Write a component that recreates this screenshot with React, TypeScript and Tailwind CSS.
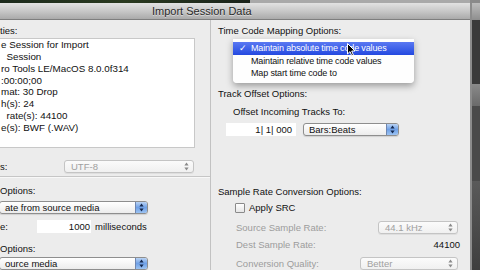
import React from "react";

function Arrows({ color }: { color: string }) {
  return (
    <svg width="5" height="9" viewBox="0 0 5 9">
      <path d="M2.5 0.5 L4.6 3.4 L0.4 3.4 Z" fill={color} />
      <path d="M2.5 8.5 L4.6 5.6 L0.4 5.6 Z" fill={color} />
    </svg>
  );
}

function Popup({
  className,
  text,
  disabled,
}: {
  className: string;
  text: string;
  disabled?: boolean;
}) {
  if (disabled) {
    return (
      <div
        className={
          "h-[13px] rounded-[3px] border border-[#c4c4c4] bg-gradient-to-b from-[#fbfbfb] to-[#f0f0f0] flex items-center shadow-[0_1px_0_rgba(0,0,0,0.06)] " +
          className
        }
      >
        <span className="flex-1 pl-[6px] text-[#a0a0a0] leading-[11px] whitespace-nowrap overflow-hidden">
          {text}
        </span>
        <div className="w-[13px] h-full flex items-center justify-center">
          <Arrows color="#8a8a8a" />
        </div>
      </div>
    );
  }
  return (
    <div
      className={
        "h-[13px] rounded-[3px] border border-[#8e8e8e] bg-gradient-to-b from-white to-[#ececec] flex items-center shadow-[0_1px_1px_rgba(0,0,0,0.12)] overflow-hidden " +
        className
      }
    >
      <span className="flex-1 pl-[5px] leading-[11px] whitespace-nowrap overflow-hidden">
        {text}
      </span>
      <div className="w-[12px] h-full flex items-center justify-center bg-gradient-to-b from-[#b9d3f4] via-[#6fa0e6] to-[#9cc3f2] border-l border-[#6e86b0]">
        <Arrows color="#14284e" />
      </div>
    </div>
  );
}

export default function App() {
  return (
    <div className="relative w-[480px] h-[270px] overflow-hidden bg-[#3a3a3a] flex flex-col text-[9.5px] text-[#111] font-['Liberation_Sans',Arial,sans-serif]">
      {/* top background strip */}
      <div className="h-[3px] flex shrink-0">
        <div className="w-[250px] bg-gradient-to-r from-[#1c2a1c] via-[#2a3a20] to-[#1a221a]" />
        <div className="w-[220px] bg-[#a9a9a9]" />
        <div className="flex-1 bg-[#8a8a8a]" />
      </div>
      <div className="flex flex-1 min-h-0">
        <div className="w-[470px] flex flex-col">
          {/* title bar */}
          <div className="h-[17px] shrink-0 bg-gradient-to-b from-[#e2e2e2] via-[#c8c8c8] to-[#aaaaaa] border-b border-[#7e7e7e] flex items-center pl-[152px]">
            <span className="text-[11px] text-[#2a2a2a] leading-[12px] [text-shadow:0_1px_0_rgba(255,255,255,0.5)]">
              Import Session Data
            </span>
          </div>
          {/* body */}
          <div className="flex flex-1 bg-[#ececec] min-h-0">
            {/* left panel */}
            <div className="w-[211px] shrink-0 border-r border-[#c2c2c2] flex flex-col">
              <div className="mt-[5px] h-[12px] leading-[12px]">ties:</div>
              <div className="mt-[1px] h-[112px] w-[196px] -ml-[1px] bg-white border border-[#c8c8c8] pl-[1px] text-[9.8px] leading-[11.85px] whitespace-pre">
                <div>e Session for Import</div>
                <div>{"  Session"}</div>
                <div>ro Tools LE/MacOS 8.0.0f314</div>
                <div>:00:00;00</div>
                <div>mat: 30 Drop</div>
                <div>h(s): 24</div>
                <div>{"  rate(s): 44100"}</div>
                <div>e(s): BWF (.WAV)</div>
              </div>
              <div className="mt-[12px] h-[13px] flex items-center">
                <span className="w-[64px] leading-[12px]">s:</span>
                <Popup className="w-[130px]" text="UTF-8" disabled />
              </div>
              <div className="mt-[3px] h-px bg-[#c6c6c6] shadow-[0_1px_0_#f8f8f8]" />
              <div className="mt-[8px] h-[12px] leading-[12px]">Options:</div>
              <div className="mt-[4px] flex">
                <Popup className="w-[149px] -ml-[1px]" text="ate from source media" />
              </div>
              <div className="mt-[6px] h-[13px] flex items-center">
                <span className="w-[37px] leading-[12px]">e:</span>
                <div className="w-[54px] h-[13px] bg-white flex items-center justify-end pr-[1px] leading-[12px]">
                  1000
                </div>
                <span className="ml-[4px] leading-[12px]">milliseconds</span>
              </div>
              <div className="mt-[10px] h-[12px] leading-[12px]">Options:</div>
              <div className="mt-[2px] flex">
                <Popup className="w-[149px] -ml-[1px]" text="ource media" />
              </div>
            </div>
            {/* right panel */}
            <div className="flex-1 flex flex-col pl-[7px] pr-[12px]">
              <div className="mt-[5px] h-[12px] leading-[12px]">Time Code Mapping Options:</div>
              <div className="h-[46px] shrink-0" />
              <div className="-ml-[7px] -mr-[12px] h-px bg-[#c6c6c6] shadow-[0_1px_0_#f8f8f8]" />
              <div className="mt-[5px] h-[12px] leading-[12px]">Track Offset Options:</div>
              <div className="mt-[6px] h-[12px] leading-[12px] pl-[15px]">Offset Incoming Tracks To:</div>
              <div className="mt-[5px] h-[13px] flex items-center pl-[8px]">
                <div className="w-[70px] h-[13px] bg-white flex items-center justify-end pr-[4px] leading-[12px] whitespace-pre">
                  {"1| 1| 000"}
                </div>
                <Popup className="w-[96px] ml-[7px]" text="Bars:Beats" />
              </div>
              <div className="mt-[42px] -ml-[7px] -mr-[12px] h-px bg-[#c6c6c6] shadow-[0_1px_0_#f8f8f8]" />
              <div className="mt-[8px] h-[12px] leading-[12px]">Sample Rate Conversion Options:</div>
              <div className="mt-[4px] h-[12px] flex items-center pl-[17px]">
                <div className="w-[10px] h-[10px] border border-[#8a8a8a] rounded-[1px] bg-gradient-to-b from-white to-[#e6e6e6]" />
                <span className="ml-[4px] leading-[12px]">Apply SRC</span>
              </div>
              <div className="mt-[7px] h-[13px] flex items-center pl-[18px]">
                <span className="flex-1 text-[#9c9c9c] leading-[12px]">Source Sample Rate:</span>
                <Popup className="w-[80px]" text="44.1 kHz" disabled />
              </div>
              <div className="mt-[5px] h-[12px] flex items-center pl-[18px]">
                <span className="flex-1 text-[#9c9c9c] leading-[12px]">Dest Sample Rate:</span>
                <span className="leading-[12px] mr-[-2px]">44100</span>
              </div>
              <div className="mt-[6px] h-[13px] flex items-center pl-[18px]">
                <span className="flex-1 text-[#9c9c9c] leading-[12px]">Conversion Quality:</span>
                <Popup className="w-[98px]" text="Better" disabled />
              </div>
            </div>
          </div>
        </div>
        {/* right background strip */}
        <div className="flex-1 flex">
          <div className="w-[2px] bg-[#8c8c8c]" />
          <div className="flex-1 flex flex-col">
            <div className="h-[17px] bg-gradient-to-b from-[#bdbdbd] to-[#8e8e8e]" />
            <div className="h-[64px] bg-[#3a3a3a]" />
            <div className="h-[22px] bg-gradient-to-b from-[#8a8a8a] to-[#6a6a6a]" />
            <div className="h-[75px] bg-[#4a4a4a]" />
            <div className="flex-1 bg-gradient-to-b from-[#5a5a5a] to-[#3e3e3e]" />
          </div>
        </div>
      </div>

      {/* open popup menu */}
      <div className="absolute left-[233px] top-[39px] w-[181px] bg-white/95 rounded-b-[4px] shadow-[0_3px_7px_rgba(0,0,0,0.35)] py-[3px] text-[9px] tracking-[-0.15px]">
        <div className="h-[12.5px] flex items-center bg-gradient-to-b from-[#5a78f2] to-[#2448e0] text-white">
          <span className="w-[18px] pl-[6px] text-[9px]">✓</span>
          <span className="leading-[12px]">Maintain absolute time code values</span>
        </div>
        <div className="h-[12.5px] flex items-center">
          <span className="w-[18px]" />
          <span className="leading-[12px]">Maintain relative time code values</span>
        </div>
        <div className="h-[12.5px] flex items-center">
          <span className="w-[18px]" />
          <span className="leading-[12px]">Map start time code to</span>
        </div>
      </div>

      {/* mouse cursor */}
      <svg
        className="absolute left-[347px] top-[43px]"
        width="9"
        height="14"
        viewBox="0 0 9 14"
      >
        <path
          d="M0.5 0.5 L0.5 11 L3 8.6 L4.8 12.8 L6.4 12.1 L4.7 8 L8 8 Z"
          fill="#000"
          stroke="#fff"
          strokeWidth="1"
          strokeLinejoin="round"
        />
      </svg>
    </div>
  );
}
